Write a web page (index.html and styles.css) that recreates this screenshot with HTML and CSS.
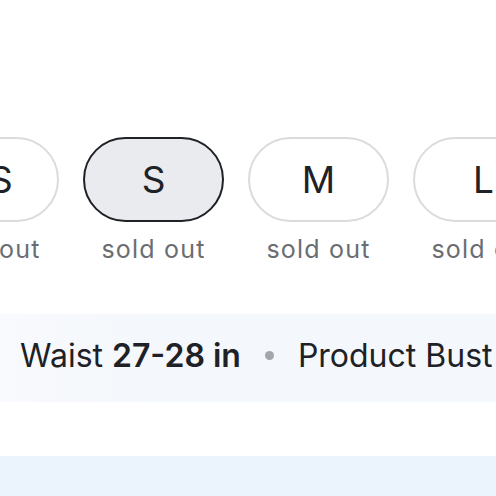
FILE: index.html
```html
<!DOCTYPE html>
<html>
<head>
<meta charset="utf-8">
<link rel="stylesheet" href="styles.css">
</head>
<body>
<div class="page">
  <div class="sizes">
    <div class="size"><div class="pill">XS</div><div class="note">sold out</div></div>
    <div class="size"><div class="pill selected">S</div><div class="note">sold out</div></div>
    <div class="size"><div class="pill">M</div><div class="note">sold out</div></div>
    <div class="size"><div class="pill">L</div><div class="note">sold out</div></div>
  </div>
  <div class="measure">
    <span class="item">Waist <b>27-28 in</b></span>
    <span class="dot"></span>
    <span class="item">Product Bust <b>32-33 in</b></span>
  </div>
  <div class="footer"></div>
</div>
</body>
</html>
```
FILE: styles.css
```css
html, body {
  margin: 0;
  padding: 0;
  background: #ffffff;
}
.page {
  width: 496px;
  height: 496px;
  overflow: hidden;
  display: flex;
  flex-direction: column;
  font-family: Inter, "Noto Sans", sans-serif;
  color: #1e2125;
}
.sizes {
  display: flex;
  gap: 24px;
  margin-top: 137px;
  margin-left: -82px;
}
.size {
  flex: 0 0 141px;
  display: flex;
  flex-direction: column;
  align-items: center;
  gap: 12px;
}
.pill {
  box-sizing: border-box;
  width: 141px;
  height: 85px;
  border: 2px solid #dadbdd;
  border-radius: 43px;
  display: flex;
  align-items: center;
  justify-content: center;
  font-size: 37px;
  font-weight: 400;
  color: #1e2125;
  background: #ffffff;
}
.pill.selected {
  border: 2.5px solid #1e2125;
  background: #e9ebee;
}
.note {
  font-size: 25px;
  line-height: 30px;
  letter-spacing: 1.2px;
  color: #6a6d72;
  white-space: nowrap;
}
.measure {
  box-sizing: border-box;
  margin-top: 50px;
  height: 88px;
  padding: 0 0 5px 20px;
  display: flex;
  align-items: center;
  gap: 24px;
  white-space: nowrap;
  font-size: 32px;
  background: linear-gradient(90deg, #f8fafd 0%, #f4f7fb 30%, #f4f7fb 100%);
}
.measure b {
  font-weight: 600;
}
.dot {
  flex: 0 0 9px;
  width: 9px;
  height: 9px;
  border-radius: 50%;
  background: #a3a6ab;
}
.footer {
  margin-top: 54px;
  flex: 1;
  background: #ebf3fd;
}
```
